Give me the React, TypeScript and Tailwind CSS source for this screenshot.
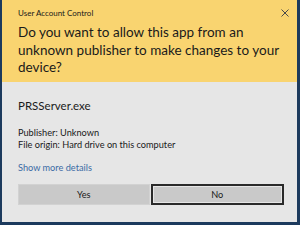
export default function App() {
  const font = { fontFamily: 'Lato, "Noto Sans", sans-serif' };
  return (
    <div className="flex h-[225px] w-[300px] flex-col bg-[#1c3a5d] pb-[3px] pl-[2px] pr-[3px]" style={font}>
      {/* yellow header */}
      <div className="relative h-[82px] shrink-0 bg-[#f9d470] pl-[16px] pt-[8px] text-[#1a1a1a]">
        <div className="text-[8px] leading-[11px]">User Account Control</div>
        <div className="mt-[5px] whitespace-nowrap text-[13.5px] leading-[17.5px]">
          Do you want to allow this app from an
          <br />
          unknown publisher to make changes to your
          <br />
          device?
        </div>
        {/* close glyph */}
        <svg className="absolute right-[8px] top-[9px]" width="8" height="8" viewBox="0 0 8 8">
          <path d="M0.5 0.5L7.5 7.5M7.5 0.5L0.5 7.5" stroke="#4a4a4a" strokeWidth="1" />
        </svg>
      </div>
      {/* body */}
      <div className="flex flex-1 flex-col bg-[#e6e6e6] pl-[16px] pr-[13px] text-[#1a1a1a]">
        <div className="mt-[16px] text-[11.5px] leading-[15px]">PRSServer.exe</div>
        <div className="mt-[14px] text-[9.2px] leading-[12px]">Publisher: Unknown</div>
        <div className="text-[9.2px] leading-[12px]">File origin: Hard drive on this computer</div>
        <div className="mt-[11px] text-[9.2px] leading-[12px] text-[#3b6ba5]">Show more details</div>
        <div className="mt-[10px] flex gap-[1px]">
          <div className="flex h-[21px] flex-1 items-center justify-center border border-[#d2d2d2] bg-[#c9c9c9] text-[9.2px]">
            Yes
          </div>
          <div className="flex h-[21px] flex-1 items-center justify-center border-2 border-[#2a2a2a] bg-[#c9c9c9] text-[9.2px] ring-1 ring-inset ring-[#e6e6e6]">
            No
          </div>
        </div>
      </div>
    </div>
  );
}
